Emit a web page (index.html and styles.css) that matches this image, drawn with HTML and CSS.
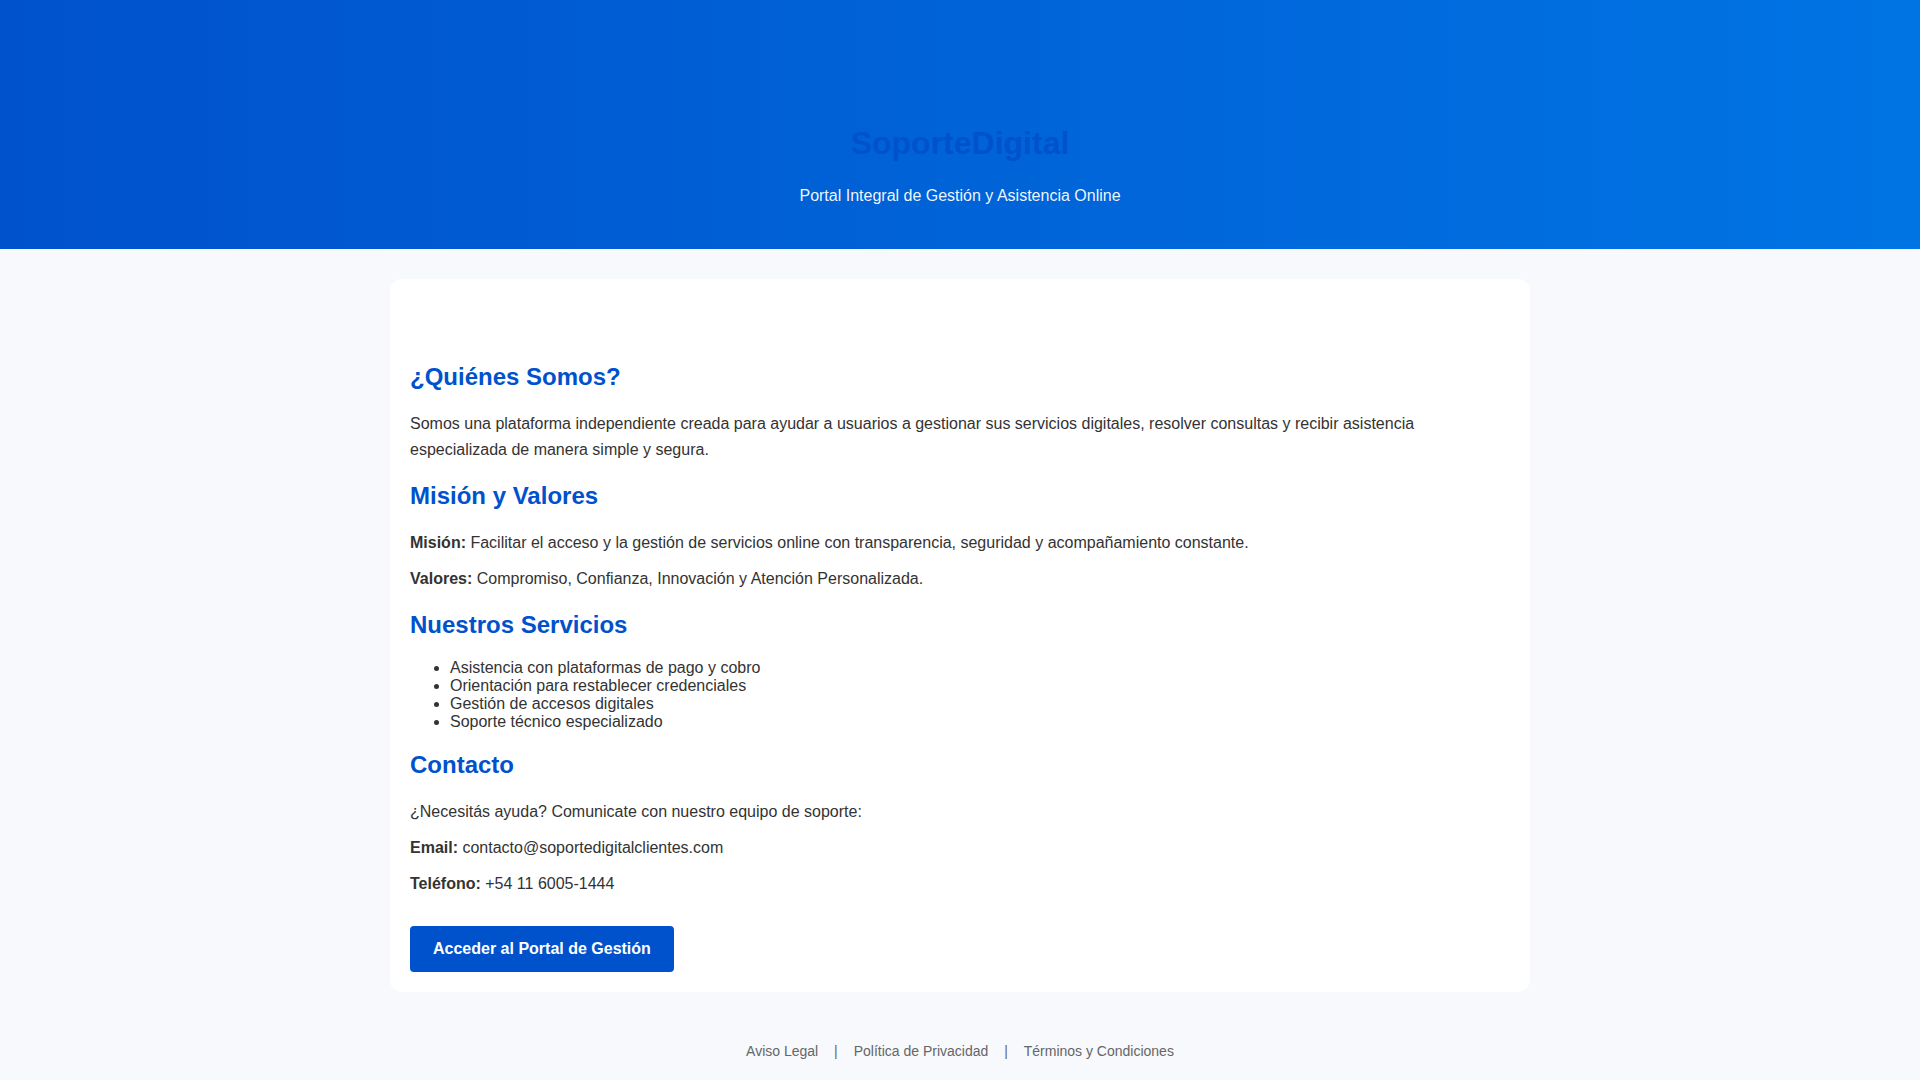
FILE: index.html
```html
<!DOCTYPE html>
<html lang="es">
<head>
<meta charset="utf-8">
<title>SoporteDigital</title>
<link rel="stylesheet" href="styles.css">
</head>
<body>
<header class="hero">
  <h1 class="hero-title">SoporteDigital</h1>
  <p class="hero-sub">Portal Integral de Gestión y Asistencia Online</p>
</header>

<main class="card">
  <div class="card-top"></div>

  <h2 class="sec-title">¿Quiénes Somos?</h2>
  <p class="txt">Somos una plataforma independiente creada para ayudar a usuarios a gestionar sus servicios digitales, resolver consultas y recibir asistencia especializada de manera simple y segura.</p>

  <h2 class="sec-title">Misión y Valores</h2>
  <p class="txt"><strong>Misión:</strong> Facilitar el acceso y la gestión de servicios online con transparencia, seguridad y acompañamiento constante.</p>
  <p class="txt"><strong>Valores:</strong> Compromiso, Confianza, Innovación y Atención Personalizada.</p>

  <h2 class="sec-title">Nuestros Servicios</h2>
  <ul class="list">
    <li>Asistencia con plataformas de pago y cobro</li>
    <li>Orientación para restablecer credenciales</li>
    <li>Gestión de accesos digitales</li>
    <li>Soporte técnico especializado</li>
  </ul>

  <h2 class="sec-title">Contacto</h2>
  <p class="txt">¿Necesitás ayuda? Comunicate con nuestro equipo de soporte:</p>
  <p class="txt"><strong>Email:</strong> contacto@soportedigitalclientes.com</p>
  <p class="txt"><strong>Teléfono:</strong> +54 11 6005-1444</p>

  <div class="cta">
    <a class="btn" href="#">Acceder al Portal de Gestión</a>
  </div>
</main>

<footer class="foot">
  <a class="foot-link" href="#">Aviso Legal</a> | <a class="foot-link" href="#">Política de Privacidad</a> | <a class="foot-link" href="#">Términos y Condiciones</a>
</footer>
</body>
</html>
```

FILE: styles.css
```css
* { box-sizing: border-box; }

html, body {
  margin: 0;
  padding: 0;
}

body {
  background: #f7f9fc;
  font-family: "Liberation Sans", Arial, sans-serif;
  color: #333333;
  font-size: 16px;
}

.hero {
  background: linear-gradient(90deg, #0052cc 0%, #0074e4 100%);
  text-align: center;
  padding: 123px 20px 41px;
  height: 249px;
}

.hero-title {
  margin: 0;
  font-size: 32px;
  line-height: 40px;
  font-weight: 700;
  color: #0052cc;
}

.hero-sub {
  margin: 21px 0 0;
  font-size: 16px;
  line-height: 24px;
  color: rgba(255, 255, 255, 0.95);
}

.card {
  display: block;
  width: 1140px;
  margin: 30px auto 31px;
  background: #ffffff;
  border-radius: 12px;
  padding: 20px;
}

.card-top {
  height: 44px;
}

.sec-title {
  margin: 20px 0;
  font-size: 24px;
  font-weight: 700;
  color: #0052cc;
  line-height: normal;
}

.txt {
  margin: 10px 0;
  line-height: 1.6;
}

.txt strong {
  font-weight: 700;
  color: #333333;
}

.list {
  margin: 16px 0;
  padding-left: 40px;
  line-height: normal;
}

.cta {
  display: flex;
  margin-top: 30px;
}

.btn {
  display: inline-block;
  background: #0052cc;
  color: #ffffff;
  font-weight: 700;
  font-size: 16px;
  line-height: 18px;
  padding: 14px 23px;
  border-radius: 4px;
  text-decoration: none;
}

.foot {
  text-align: center;
  padding: 20px;
  font-size: 14px;
  line-height: 16px;
  color: #666666;
}

.foot-link {
  color: #666666;
  text-decoration: none;
  margin: 0 12px;
}
```
